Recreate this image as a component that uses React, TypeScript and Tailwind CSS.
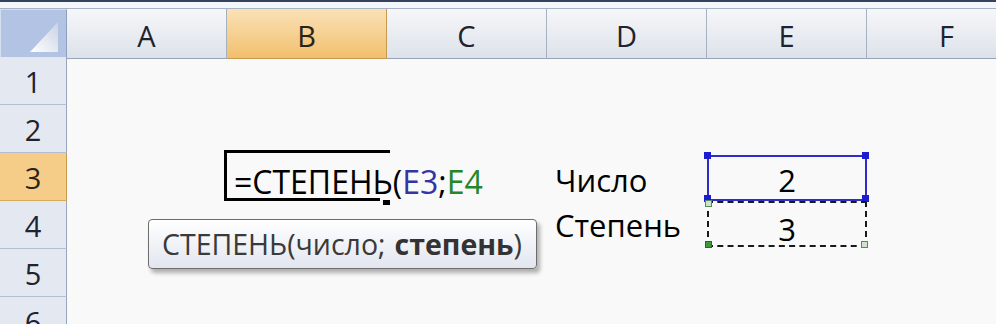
import React from 'react';

const cols = ['A', 'B', 'C', 'D', 'E', 'F'];
const rows = [1, 2, 3, 4, 5, 6];

const cellFont = { fontFamily: '"Open Sans", "Noto Sans", sans-serif' };

const Corner: React.FC<{ className: string }> = ({ className }) => (
  <span className={`absolute w-[7px] h-[7px] ${className}`} />
);

const App: React.FC = () => {
  return (
    <div className="relative w-[996px] h-[324px] overflow-hidden bg-[#f9f9f9]" style={cellFont}>
      {/* strip above the headers */}
      <div className="h-[9px] border-t-2 border-t-[#34425c] border-b border-b-[#a7b3c5] bg-[#f3f6fa]" />

      {/* column headers */}
      <div className="grid grid-cols-[67px_160px_160px_160px_160px_160px_160px] h-[48px]">
        <div className="flex items-end justify-end pr-[8px] pb-[6px] bg-[#b3c3e3] border border-[#d6dff0] border-r-[#8da0bf] border-b-[#8da0bf]">
          <svg width="28" height="30" viewBox="0 0 28 30">
            <defs>
              <linearGradient id="tri" x1="0" y1="1" x2="1" y2="0">
                <stop offset="0" stopColor="#ffffff" />
                <stop offset="1" stopColor="#c9d3e4" />
              </linearGradient>
            </defs>
            <polygon points="28,0 28,30 0,30" fill="url(#tri)" />
          </svg>
        </div>
        {cols.map((c) => (
          <div
            key={c}
            className={
              c === 'B'
                ? 'flex items-center justify-center pt-[5px] text-[29px] text-[#2a2416] bg-gradient-to-b from-[#fae2b6] to-[#f1bf6c] border-r border-b border-[#c89a4e]'
                : 'flex items-center justify-center pt-[5px] text-[29px] text-[#1d2330] bg-gradient-to-b from-[#f6f7f9] to-[#dde2ea] border-r border-r-[#a6b1c2] border-b border-b-[#97a4b8]'
            }
          >
            {c}
          </div>
        ))}
      </div>

      {/* body */}
      <div className="grid grid-cols-[67px_160px_160px_160px_160px_160px_160px] grid-rows-[repeat(6,48px)]">
        {rows.map((r) => (
          <React.Fragment key={r}>
            <div
              className={
                r === 3
                  ? 'flex items-center justify-center pt-[2px] text-[29px] text-[#2a2416] bg-[#f6cd88] border-r border-r-[#c89a4e] border-b border-b-[#d9aa5c]'
                  : 'flex items-center justify-center pt-[2px] text-[29px] text-[#1d2330] bg-[#e3e8f1] border-r border-r-[#97a6bc] border-b border-b-[#b2bfd2]'
              }
            >
              {r}
            </div>

            {/* A */}
            <div />

            {/* B: cell being edited */}
            {r === 3 ? (
              <div className="relative flex items-start pl-[7px] pt-[13px] whitespace-nowrap text-[32px] leading-none text-black">
                <span className="absolute left-[-3px] top-[-3px] w-[166px] h-[3px] bg-black" />
                <span className="absolute left-[-3px] top-[-3px] w-[3px] h-[51px] bg-black" />
                <span className="absolute left-[-3px] top-[45px] w-[156px] h-[3px] bg-black" />
                <span className="absolute left-[155px] top-[46px] w-[9px] h-[7px] bg-black border border-[#f9f9f9]" />
                <span>
                  =СТЕПЕНЬ(<span className="text-[#3434a6]">Е3</span>;<span className="text-[#25862a]">Е4</span>
                </span>
              </div>
            ) : (
              <div />
            )}

            {/* C */}
            <div />

            {/* D */}
            <div
              className={`flex items-start pl-[8px] text-[31px] leading-none text-black ${
                r === 4 ? 'pt-[9px]' : 'pt-[12px]'
              }`}
            >
              {r === 3 && 'Число'}
              {r === 4 && 'Степень'}
            </div>

            {/* E */}
            {r === 3 ? (
              <div className="relative flex justify-center pt-[12px] text-[31px] leading-none text-black">
                <div className="absolute left-0 top-[2px] w-[160px] h-[46px] border-2 border-[#2e2ec4]" />
                <Corner className="left-[-3px] top-[-1px] bg-[#1c1cd0]" />
                <Corner className="left-[155px] top-[-1px] bg-[#1c1cd0]" />
                <Corner className="left-[-3px] top-[42px] bg-[#1c1cd0]" />
                <Corner className="left-[155px] top-[42px] bg-[#1c1cd0]" />
                2
              </div>
            ) : r === 4 ? (
              <div className="relative flex justify-center pt-[13px] text-[31px] leading-none text-black">
                <div className="absolute left-0 top-0 w-[160px] h-[46px] border-2 border-dashed border-[#1a1a1a]" />
                <Corner className="left-[-2px] top-[40px] bg-[#3a9a3a] border border-[#1f6f1f]" />
                <Corner className="left-[154px] top-[40px] bg-[#cfe3cf] border border-[#4f8f4f]" />
                <Corner className="left-[-2px] top-[-1px] bg-[#cfe3cf] border border-[#4f8f4f]" />
                3
              </div>
            ) : (
              <div />
            )}

            {/* F */}
            <div />
          </React.Fragment>
        ))}
      </div>

      {/* function tooltip */}
      <div className="absolute left-[148px] top-[219px] w-[389px] h-[50px] flex items-center pl-[13px] rounded-[4px] border border-[#6e6e6e] bg-gradient-to-b from-[#ffffff] to-[#e2e6ef] shadow-[3px_4px_4px_rgba(0,0,0,0.3)] whitespace-nowrap text-[28.5px] text-[#3a3a3a]">
        <span>СТЕПЕНЬ(число;</span>
        <span className="w-[9px]" />
        <span className="font-bold text-[#333333]">степень</span>
        <span>)</span>
      </div>
    </div>
  );
};

export default App;
